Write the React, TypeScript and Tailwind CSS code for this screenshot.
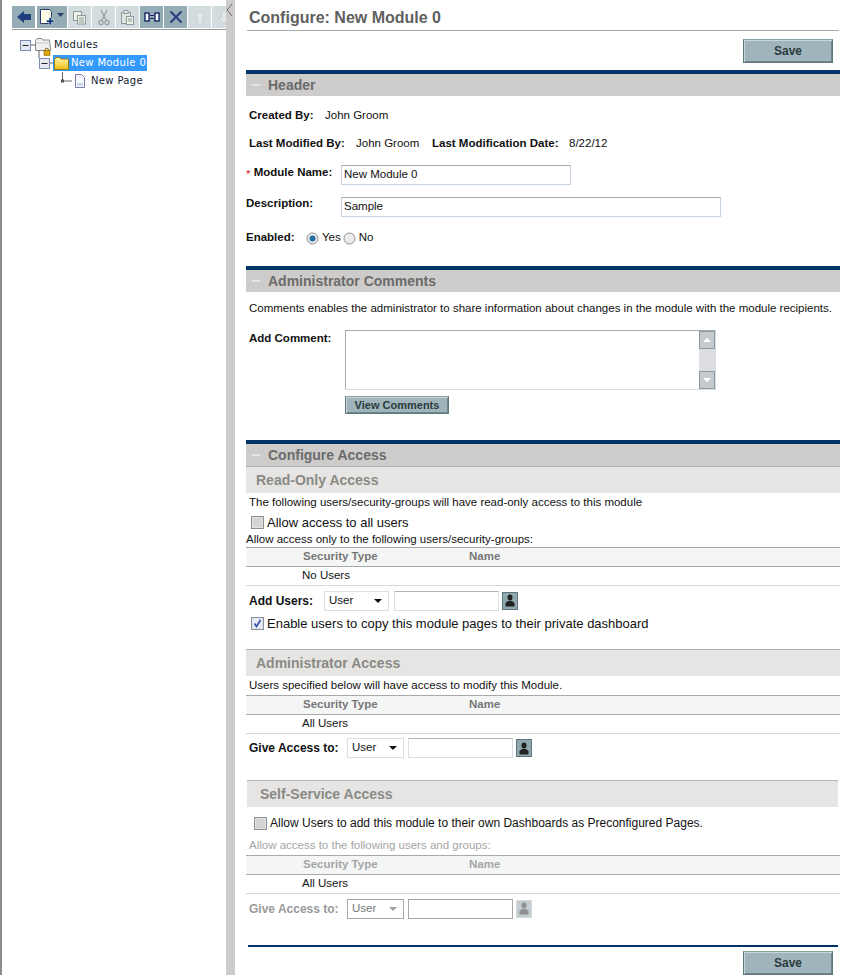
import React from "react";

const Sans = "font-['Liberation_Sans',Arial,sans-serif]";

function ToolBtn({ on = false, w = "w-[23px]", children }: { on?: boolean; w?: string; children: React.ReactNode }) {
  return (
    <div className={`${w} h-[22px] shrink-0 flex items-center justify-center ${on ? "bg-[#94adb5]" : "bg-[#d3dddf]"}`}>
      {children}
    </div>
  );
}

function Toolbar() {
  return (
    <div className="flex gap-[1px] mt-[6px] ml-[12px] w-[214px] overflow-hidden">
      <ToolBtn on>
        <svg width="16" height="14" viewBox="0 0 16 14">
          <path d="M1 7 L8 1 V4 H15 V10 H8 V13 Z" fill="#1f3f7f" />
        </svg>
      </ToolBtn>
      <ToolBtn on w="w-[30px] ml-[1px]">
        <svg width="26" height="18" viewBox="0 0 26 18">
          <path d="M1.5 1.5 H10.5 L12.5 3.5 V15.5 H1.5 Z" fill="#fbfbe6" stroke="#2a3a70" />
          <path d="M10 9.5 H12.5 V12 H15 V14.5 H12.5 V17 H10 V14.5 H7.5 V12 H10 Z" fill="#123f80" stroke="#fff" strokeWidth="0.5" />
          <path d="M18 5 H25 L21.5 9 Z" fill="#24406f" />
        </svg>
      </ToolBtn>
      <ToolBtn>
        <svg width="15" height="15" viewBox="0 0 15 15" fill="#eef1e4" stroke="#8d9aa0">
          <rect x="1.5" y="1.5" width="8" height="9" />
          <rect x="5.5" y="5.5" width="8" height="8.5" />
          <path d="M7 8 H12 M7 10 H12 M7 12 H12" fill="none" />
        </svg>
      </ToolBtn>
      <ToolBtn>
        <svg width="12" height="17" viewBox="0 0 12 17" fill="none" stroke="#94a0a4" strokeWidth="1.2">
          <path d="M3 1 L8 11 M9 1 L4 11" />
          <circle cx="3" cy="13.5" r="2.2" />
          <circle cx="9" cy="13.5" r="2.2" />
        </svg>
      </ToolBtn>
      <ToolBtn>
        <svg width="15" height="17" viewBox="0 0 15 17" fill="#eef1e4" stroke="#8d9aa0">
          <rect x="1.5" y="3.5" width="9" height="11" fill="#dfe4dc" />
          <rect x="4" y="1.5" width="4" height="3" />
          <rect x="6.5" y="7.5" width="7" height="8" />
          <path d="M8 10 H12 M8 12 H12" fill="none" />
        </svg>
      </ToolBtn>
      <ToolBtn on>
        <svg width="16" height="10" viewBox="0 0 16 10" fill="#fff" stroke="#14246a" strokeWidth="1.4">
          <rect x="1" y="1" width="4" height="8" />
          <rect x="11" y="1" width="4" height="8" />
          <path d="M6 3.5 H10 M6 6.5 H10" fill="none" strokeWidth="1" />
        </svg>
      </ToolBtn>
      <ToolBtn on>
        <svg width="14" height="14" viewBox="0 0 14 14" stroke="#25407a" strokeWidth="2">
          <path d="M1.5 1.5 L12.5 12.5 M12.5 1.5 L1.5 12.5" />
        </svg>
      </ToolBtn>
      <ToolBtn>
        <svg width="14" height="15" viewBox="0 0 14 15">
          <path d="M7 1 L13 7 H9.5 V14 H4.5 V7 H1 Z" fill="#e2e8e9" stroke="#c6d0d2" />
        </svg>
      </ToolBtn>
      <ToolBtn>
        <svg width="14" height="15" viewBox="0 0 14 15">
          <path d="M7 14 L13 8 H9.5 V1 H4.5 V8 H1 Z" fill="#e2e8e9" stroke="#c6d0d2" />
        </svg>
      </ToolBtn>
    </div>
  );
}

function MinusBox() {
  return (
    <svg width="11" height="11" viewBox="0 0 11 11" className="shrink-0">
      <rect x="0.5" y="0.5" width="10" height="10" fill="#e6e9f2" stroke="#7a8cb4" />
      <path d="M2.5 5.5 H8.5" stroke="#222" />
    </svg>
  );
}

function Tree() {
  return (
    <div className="mt-[6px] ml-[20px] font-['DejaVu_Sans',Verdana,sans-serif] text-[10px] tracking-[0.35px] leading-[18px] text-[#111a33]">
      <div className="flex items-center h-[18px]">
        <MinusBox />
        <svg width="4" height="2" viewBox="0 0 4 2" className="shrink-0"><path d="M0 1 H4" stroke="#666" /></svg>
        <svg width="17" height="18" viewBox="0 0 17 18" className="shrink-0 overflow-visible">
          <path d="M0.5 4.5 L2 2.5 H7 L8 4 H14.5 L15.5 14.5 H0.5 Z" fill="#f0f0f0" stroke="#8a8a8a" />
          <path d="M0.5 7 H15.5" stroke="#c8c8c8" />
          <path d="M-3 14 V22" stroke="#666" transform="translate(7 0)" />
          <path d="M11.5 13 V12 A1.7 1.7 0 0 1 15 12 V13" fill="none" stroke="#8a6a10" transform="translate(-1.5 2)" />
          <rect x="9" y="14.5" width="6" height="5" fill="#e0a908" stroke="#8a6a10" strokeWidth="0.6" />
        </svg>
        <span className="ml-[2px]">Modules</span>
      </div>
      <div className="flex items-center h-[18px] ml-[19px]">
        <MinusBox />
        <svg width="3" height="2" viewBox="0 0 3 2" className="shrink-0"><path d="M0 1 H3" stroke="#666" /></svg>
        <div className="flex items-center w-[94px] h-[16px] bg-[#3399ff] text-white shrink-0 whitespace-nowrap overflow-hidden">
          <svg width="16" height="13" viewBox="0 0 16 13" className="ml-[1px] shrink-0">
            <defs>
              <linearGradient id="fy" x1="0" y1="0" x2="0" y2="1">
                <stop offset="0" stopColor="#fff8b0" />
                <stop offset="1" stopColor="#f0bd10" />
              </linearGradient>
            </defs>
            <path d="M0.5 2.5 L2 0.5 H6 L7 2 H14.5 V12.5 H0.5 Z" fill="url(#fy)" stroke="#9c7a10" />
          </svg>
          <span className="ml-[1px]">New Module 0</span>
        </div>
      </div>
      <div className="flex items-center h-[18px] ml-[41px]">
        <svg width="12" height="12" viewBox="0 0 12 12" className="shrink-0 overflow-visible">
          <path d="M1.5 -3 V6 H11" fill="none" stroke="#666" />
          <rect x="0" y="4.5" width="3" height="3" fill="#555" />
        </svg>
        <svg width="12" height="14" viewBox="0 0 12 14" className="ml-[1px] shrink-0">
          <path d="M1.5 0.5 H7.5 L10.5 3.5 V13.5 H1.5 Z" fill="#f4f6fc" stroke="#7c78b0" />
          <path d="M3 9 H9 V12 H3 Z" fill="#cfd8f0" />
        </svg>
        <span className="ml-[5px]">New Page</span>
      </div>
    </div>
  );
}

function SaveBtn() {
  return (
    <button className="w-[90px] h-[24px] bg-[#9fb5bb] border border-[#62787f] border-t-[#8aa0a7] shadow-[inset_1px_1px_0_#c9d6d9,inset_-1px_-1px_0_#6f868d] text-[12px] font-bold text-[#2c3a40]">
      Save
    </button>
  );
}

function Section({ title, mt }: { title: string; mt: string }) {
  return (
    <div className={mt}>
      <div className="h-[4px] bg-[#003366]" />
      <div className="h-[22px] bg-[#cdccca] flex items-center">
        <svg width="8" height="2" viewBox="0 0 8 2" className="ml-[6px]"><path d="M0 1 H8" stroke="#eeeeee" strokeWidth="1.5" /></svg>
        <span className="ml-[8px] text-[14px] font-bold text-[#6b6b6b]">{title}</span>
      </div>
    </div>
  );
}

function SubBand({ title, cls }: { title: string; cls: string }) {
  return (
    <div className={`h-[27px] bg-[#e6e5e3] border-t border-[#b3b3b3] flex items-center text-[14px] font-bold text-[#8a8a86] ${cls}`}>
      {title}
    </div>
  );
}

function UserTable({ text, dim = false }: { text: string; dim?: boolean }) {
  return (
    <div className="text-[11.5px]">
      <div className={`h-[20px] flex items-center bg-[#f4f6f5] border-t border-b border-[#a9a9a9] font-bold ${dim ? "text-[#a5a5a5]" : "text-[#777777]"}`}>
        <span className="ml-[57px] w-[166px]">Security Type</span>
        <span>Name</span>
      </div>
      <div className="h-[19px] flex items-center border-b border-[#d8d8d8] text-[#111]">
        <span className="ml-[56px]">{text}</span>
      </div>
    </div>
  );
}

function Select({ w, dim = false }: { w: string; dim?: boolean }) {
  return (
    <div className={`${w} h-[20px] shrink-0 bg-white border flex items-center pl-[4px] text-[11.5px] ${dim ? "border-[#a8a8a8] text-[#777]" : "border-[#d8dfe6] text-[#111]"}`}>
      <span className="flex-1">User</span>
      <svg width="8" height="4" viewBox="0 0 8 4" className="mr-[6px]"><path d="M0 0 H8 L4 4 Z" fill={dim ? "#a0a0a0" : "#111"} /></svg>
    </div>
  );
}

function Person({ dim = false }: { dim?: boolean }) {
  return (
    <div className={`w-[16px] h-[18px] shrink-0 flex items-center justify-center border ${dim ? "bg-[#c4cdd0] border-[#d5dadc]" : "bg-[#8fa8ae] border-[#5f767c]"}`}>
      <svg width="10" height="13" viewBox="0 0 10 13" fill={dim ? "#8f8f8f" : "#222"}>
        <ellipse cx="5" cy="3.5" rx="2.5" ry="3" />
        <path d="M0.5 12.5 V9 L3 7 H7 L9.5 9 V12.5 Z" />
      </svg>
    </div>
  );
}

function Check({ on = false }: { on?: boolean }) {
  return (
    <svg width="13" height="13" viewBox="0 0 13 13" className="shrink-0">
      <rect x="0.5" y="0.5" width="12" height="12" fill={on ? "#dfe3f2" : "#e2e2e2"} stroke="#8a8f9a" />
      <rect x="2" y="2" width="9" height="9" fill={on ? "#e8ebf6" : "#d4d4d4"} />
      {on && <path d="M3.5 6.5 L5.5 9.5 L9.5 3" fill="none" stroke="#2f4ea8" strokeWidth="1.6" />}
    </svg>
  );
}

function Radio({ on = false }: { on?: boolean }) {
  return (
    <svg width="13" height="13" viewBox="0 0 13 13" className="shrink-0">
      <circle cx="6.5" cy="6.5" r="5.5" fill="#ececec" stroke="#8c8c8c" />
      {on && <circle cx="6.5" cy="6.5" r="3" fill="#1f6f9f" />}
    </svg>
  );
}

function Field({ w, value }: { w: string; value: string }) {
  return (
    <div className={`${w} h-[20px] shrink-0 bg-white border border-[#c4d3df] border-t-[#a8a8a8] flex items-center pl-[2px] text-[11.5px] text-[#111]`}>
      {value}
    </div>
  );
}

export default function App() {
  return (
    <div className={`flex h-[975px] w-[842px] overflow-hidden bg-white text-[11.5px] text-[#111] ${Sans}`}>
      <aside className="w-[226px] shrink-0 border-l-2 border-[#8c8c8c]">
        <div className="-ml-[2px]">
          <Toolbar />
          <div className="h-[1px] ml-[12px] mt-[1px] bg-[#9a9a9a]" />
          <Tree />
        </div>
      </aside>
      <div className="w-[9px] shrink-0 bg-[#cccccc] pt-[3px]">
        <svg width="7" height="14" viewBox="0 0 7 14"><path d="M6 1 L1 7 L6 13" fill="none" stroke="#666" /></svg>
      </div>
      <main className="ml-[11px] w-[594px] shrink-0">
        <div className="mx-[1px] pl-[2px] h-[31px] border-b border-[#a8a8a8] flex items-center pt-[6px] text-[16px] font-bold text-[#5f5f5f]">
          Configure: New Module 0
        </div>
        <div className="flex justify-end mt-[8px] pr-[7px]"><SaveBtn /></div>

        <Section title="Header" mt="mt-[7px]" />
        <div className="h-[38px] flex items-center pl-[3px] pt-[1px]">
          <b className="w-[76px]">Created By:</b>John Groom
        </div>
        <div className="h-[20px] flex items-center pl-[3px]">
          <b className="w-[107px]">Last Modified By:</b>
          <span className="w-[76px]">John Groom</span>
          <b className="w-[137px]">Last Modification Date:</b>8/22/12
        </div>
        <div className="flex items-center h-[20px] mt-[11px]">
          <span className="w-[95px]"><span className="text-[#d02020]">*</span> <b className="relative -top-[2px]">Module Name:</b></span>
          <Field w="w-[230px]" value="New Module 0" />
        </div>
        <div className="flex items-center h-[20px] mt-[12px]">
          <b className="w-[95px] relative -top-[3px]">Description:</b>
          <Field w="w-[380px]" value="Sample" />
        </div>
        <div className="flex items-center h-[14px] mt-[14px]">
          <b className="w-[60px]">Enabled:</b>
          <Radio on /><span className="ml-[3px] mr-[2px]">Yes</span>
          <Radio /><span className="ml-[3px]">No</span>
        </div>

        <Section title="Administrator Comments" mt="mt-[21px]" />
        <div className="h-[34px] flex items-center pl-[3px]">
          Comments enables the administrator to share information about changes in the module with the module recipients.
        </div>
        <div className="flex mt-[4px]">
          <b className="w-[99px] pl-[3px]">Add Comment:</b>
          <div>
            <div className="w-[371px] h-[60px] border border-[#aaaaaa] border-r-[#d8dce0] border-b-[#d8dce0] flex justify-end">
              <div className="w-[16px] h-full bg-[#dcdde1] flex flex-col justify-between">
                <div className="h-[18px] bg-[#c5cacc] border border-[#8a9aa0] flex items-center justify-center">
                  <svg width="8" height="4" viewBox="0 0 8 4"><path d="M0 4 H8 L4 0 Z" fill="#fff" /></svg>
                </div>
                <div className="h-[18px] bg-[#c5cacc] border border-[#8a9aa0] flex items-center justify-center">
                  <svg width="8" height="4" viewBox="0 0 8 4"><path d="M0 0 H8 L4 4 Z" fill="#fff" /></svg>
                </div>
              </div>
            </div>
            <button className="block mt-[6px] w-[104px] h-[18px] bg-[#9fb5bb] border border-[#62787f] border-t-[#8aa0a7] shadow-[inset_1px_1px_0_#c9d6d9,inset_-1px_-1px_0_#6f868d] text-[11px] font-bold text-[#2c3a40]">
              View Comments
            </button>
          </div>
        </div>

        <Section title="Configure Access" mt="mt-[26px]" />
        <SubBand title="Read-Only Access" cls="pl-[10px]" />
        <div className="h-[20px] flex items-center pl-[3px]">
          The following users/security-groups will have read-only access to this module
        </div>
        <div className="h-[19px] flex items-center pl-[5px] gap-[2px] text-[13px]">
          <Check /><span className="ml-[1px]">Allow access to all users</span>
        </div>
        <div className="h-[15px] flex items-center">Allow access only to the following users/security-groups:</div>
        <UserTable text="No Users" />
        <div className="flex items-center h-[29px] pl-[3px]">
          <b className="w-[75px] text-[12px]">Add Users:</b>
          <Select w="w-[65px]" />
          <div className="w-[105px] h-[20px] ml-[5px] mr-[3px] border border-[#d8dfe6] border-t-[#b5b5b5] shrink-0" />
          <Person />
        </div>
        <div className="h-[17px] flex items-center pl-[5px] gap-[2px] text-[13px]">
          <Check on /><span className="ml-[1px]">Enable users to copy this module pages to their private dashboard</span>
        </div>

        <SubBand title="Administrator Access" cls="pl-[10px] mt-[17px]" />
        <div className="h-[19px] flex items-center pl-[3px]">Users specified below will have access to modify this Module.</div>
        <UserTable text="All Users" />
        <div className="flex items-center h-[28px] pl-[3px]">
          <b className="w-[98px] text-[12px]">Give Access to:</b>
          <Select w="w-[57px]" />
          <div className="w-[105px] h-[20px] ml-[4px] mr-[3px] border border-[#d8dfe6] border-t-[#b5b5b5] shrink-0" />
          <Person />
        </div>

        <SubBand title="Self-Service Access" cls="pl-[13px] mt-[18px] ml-[1px] mr-[2px]" />
        <div className="h-[32px] flex items-center pl-[8px] gap-[2px]">
          <Check /><span className="ml-[1px] text-[12px]">Allow Users to add this module to their own Dashboards as Preconfigured Pages.</span>
        </div>
        <div className="h-[13px] flex items-center pl-[3px] text-[#a5a5a5]">Allow access to the following users and groups:</div>
        <div className="mt-[3px]"><UserTable text="All Users" dim /></div>
        <div className="flex items-center h-[29px] pl-[3px] text-[#9a9a9a]">
          <span className="w-[98px] text-[12px] font-bold">Give Access to:</span>
          <Select w="w-[57px]" dim />
          <div className="w-[105px] h-[20px] ml-[4px] mr-[3px] border border-[#a8a8a8] shrink-0" />
          <Person dim />
        </div>

        <div className="h-[2px] bg-[#003366] mt-[22px] ml-[2px] mr-[2px]" />
        <div className="flex justify-end mt-[4px] pr-[7px]"><SaveBtn /></div>
      </main>
    </div>
  );
}
